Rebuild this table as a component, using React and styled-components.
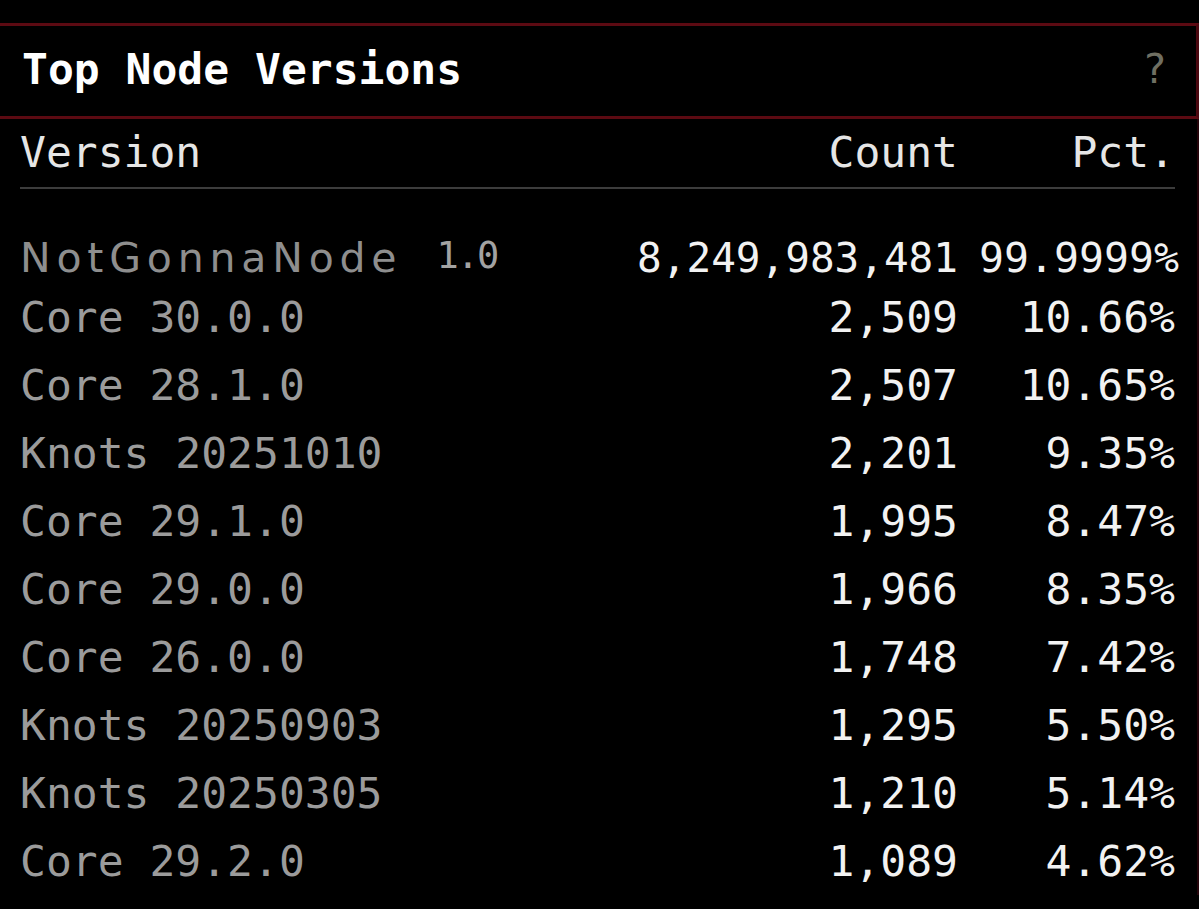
import React from "react";
import styled, { createGlobalStyle } from "styled-components";

const GlobalStyle = createGlobalStyle`
  html, body {
    margin: 0;
    padding: 0;
    background: #000;
  }
  body {
    font-family: "DejaVu Sans Mono", "Liberation Mono", monospace;
    color: #f0f0f0;
  }
`;

const Page = styled.div`
  width: 1199px;
  min-height: 909px;
  padding-top: 23px;
  box-sizing: border-box;
  background: #000;
  overflow: hidden;
`;

const TitleBar = styled.header`
  display: flex;
  justify-content: space-between;
  align-items: flex-start;
  border-top: 3px solid #5c0a12;
  border-bottom: 3px solid #5c0a12;
  border-right: 3px solid #4a0810;
  padding: 0 29px 4px 22px;
  line-height: 86px;
  font-size: 43px;
`;

const Title = styled.h1`
  margin: 0;
  font-size: 43px;
  font-weight: bold;
  color: #ffffff;
  line-height: 86px;
`;

const Help = styled.span`
  font-size: 41px;
  color: #6f6f62;
  line-height: 86px;
`;

const Body = styled.section`
  padding: 0 22px 0 20px;
  border-right: 2px solid #24040a;
  font-size: 43px;
`;

const Grid = styled.div`
  display: grid;
  grid-template-columns: 1fr 340px 217px;
  align-items: baseline;
`;

const HeadRow = styled(Grid)`
  padding: 9px 0 10px;
  line-height: 49px;
  border-bottom: 2px solid #3c3c3c;
  color: #e6e6e6;
`;

const HeadCell = styled.div`
  text-align: ${(p) => (p.$right ? "right" : "left")};
`;

const Rows = styled.div`
  padding-top: 33px;
`;

const Row = styled(Grid)`
  line-height: 68px;
  height: ${(p) => (p.$first ? "61px" : "68px")};
`;

const VersionCell = styled.div`
  color: #9b9b9b;
  white-space: nowrap;
`;

const Fancy = styled.span`
  font-family: "DejaVu Sans", "Liberation Sans", sans-serif;
  font-size: 41px;
  letter-spacing: 5.8px;
  color: #8e8e8e;
`;

const Tag = styled.span`
  font-size: 37px;
  letter-spacing: -2px;
  margin-left: 34px;
  color: #a2a2a2;
  vertical-align: 4px;
`;

const NumCell = styled.div`
  text-align: right;
  color: #f2f2f2;
  white-space: nowrap;
  font-size: ${(p) => p.$size || 43}px;
  margin-right: ${(p) => p.$shift || 0}px;
`;

const rows = [
  ["Core 30.0.0", "2,509", "10.66%"],
  ["Core 28.1.0", "2,507", "10.65%"],
  ["Knots 20251010", "2,201", "9.35%"],
  ["Core 29.1.0", "1,995", "8.47%"],
  ["Core 29.0.0", "1,966", "8.35%"],
  ["Core 26.0.0", "1,748", "7.42%"],
  ["Knots 20250903", "1,295", "5.50%"],
  ["Knots 20250305", "1,210", "5.14%"],
  ["Core 29.2.0", "1,089", "4.62%"],
];

export default function App() {
  return (
    <>
      <GlobalStyle />
      <Page>
        <TitleBar>
          <Title>Top Node Versions</Title>
          <Help>?</Help>
        </TitleBar>
        <Body>
          <HeadRow>
            <HeadCell>Version</HeadCell>
            <HeadCell $right>Count</HeadCell>
            <HeadCell $right>Pct.</HeadCell>
          </HeadRow>
          <Rows>
            <Row $first>
              <VersionCell>
                <Fancy>NotGonnaNode</Fancy>
                <Tag>1.0</Tag>
              </VersionCell>
              <NumCell $size={41}>8,249,983,481</NumCell>
              <NumCell $size={41.5} $shift={-4}>
                99.9999%
              </NumCell>
            </Row>
            {rows.map(([v, c, p]) => (
              <Row key={v}>
                <VersionCell>{v}</VersionCell>
                <NumCell>{c}</NumCell>
                <NumCell>{p}</NumCell>
              </Row>
            ))}
          </Rows>
        </Body>
      </Page>
    </>
  );
}
